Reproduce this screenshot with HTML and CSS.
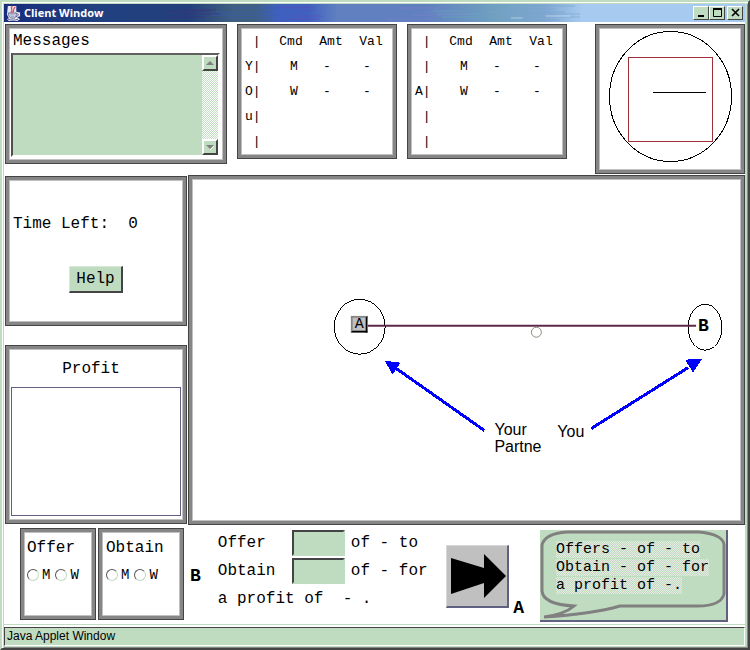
FILE: index.html
```html
<!DOCTYPE html>
<html lang="en">
<head>
<meta charset="utf-8">
<title>Client Window</title>
<link rel="stylesheet" href="styles.css">
</head>
<body>
<div class="window">
  <header class="titlebar">
    <svg class="cup" viewBox="0 0 16 16" aria-hidden="true">
      <path d="M2 0h9v6l4 1v4l-3 1 3 2-3 2H3l-2-2 2-1-2-4z" fill="#e6e6f2"/>
      <path d="M7 0c-4 3 2 3-2 7M10 1c-4 3 0 3-3 6" fill="none" stroke="#e04858" stroke-width="1.3"/>
      <path d="M2.500 7.500h8.500c0 5-1.500 5.500-4 5.500s-4-1-4.500-5.500zM11 8.500c3-1 3 2-.5 3M2 14c4 1.500 7 1.500 11 0" fill="none" stroke="#5c5c8c" stroke-width="1"/>
      <path d="M4 9.500h5M5 11.500h4" stroke="#8c8cb4"/>
    </svg>
    <h1>Client Window</h1>
    <svg class="streaks" viewBox="0 0 580 18" preserveAspectRatio="none" aria-hidden="true">
      <path d="M75 7h45M88 10h42M80 13h35M95 6h30" stroke="#403080"/>
      <path d="M125 8h60M120 11h70M140 4h50M135 14h40" stroke="#3a5cc0"/>
      <path d="M190 3h35M205 12h28M200 15h30M210 6h15" stroke="#6050b8"/>
      <path d="M310 4h45M325 11h60M300 15h45M335 8h40" stroke="#7f86cc"/>
      <path d="M345 7h35M355 13h40M350 10h50" stroke="#6aa8bc"/>
      <path d="M410 5h60M420 10h75M440 13h55M430 2h60M400 8h80M415 16h60" stroke="#78a4d0"/>
      <path d="M425 14h12M460 12h25" stroke="#d8e8f8"/>
    </svg>
    <div class="window-buttons">
      <button type="button" aria-label="Minimize"><svg viewBox="0 0 14 12"><path d="M4 9h6" stroke="#000" stroke-width="2"/></svg></button>
      <button type="button" aria-label="Maximize"><svg viewBox="0 0 14 12"><path d="M3.500 2v7.500h8V2M3 2h9" fill="none" stroke="#000"/><path d="M3 2h9" stroke="#000" stroke-width="2"/></svg></button>
      <button type="button" aria-label="Close"><svg viewBox="0 0 14 12"><path d="M4 2l7 7M11 2L4 9" stroke="#000" stroke-width="1.600"/></svg></button>
    </div>
  </header>

  <main class="applet">
    <section class="top-row">
      <div class="panel messages">
        <label for="messages">Messages</label>
        <div class="message-box">
          <textarea id="messages" readonly></textarea>
          <div class="scrollbar">
            <button type="button" aria-label="Scroll up"><svg viewBox="0 0 12 12"><path d="M2 8l4-4 4 4z" fill="#808080"/></svg></button>
            <button type="button" aria-label="Scroll down"><svg viewBox="0 0 12 12"><path d="M2 4h8L6 8z" fill="#808080"/><path d="M6 9l4-4" stroke="#fff"/></svg></button>
          </div>
        </div>
      </div>

      <div class="panel ledger">
        <table>
          <colgroup><col class="who"><col class="field"><col class="field"><col class="field"></colgroup>
          <thead><tr><td>&nbsp;|</td><th>Cmd</th><th>Amt</th><th>Val</th></tr></thead>
          <tbody>
            <tr><td>Y|</td><td>M</td><td>-</td><td>-</td></tr>
            <tr><td>O|</td><td>W</td><td>-</td><td>-</td></tr>
            <tr><td>u|</td><td></td><td></td><td></td></tr>
            <tr><td>&nbsp;|</td><td></td><td></td><td></td></tr>
          </tbody>
        </table>
      </div>

      <div class="panel ledger">
        <table>
          <colgroup><col class="who"><col class="field"><col class="field"><col class="field"></colgroup>
          <thead><tr><td>&nbsp;|</td><th>Cmd</th><th>Amt</th><th>Val</th></tr></thead>
          <tbody>
            <tr><td>&nbsp;|</td><td>M</td><td>-</td><td>-</td></tr>
            <tr><td>A|</td><td>W</td><td>-</td><td>-</td></tr>
            <tr><td>&nbsp;|</td><td></td><td></td><td></td></tr>
            <tr><td>&nbsp;|</td><td></td><td></td><td></td></tr>
          </tbody>
        </table>
      </div>

      <div class="panel gauge">
        <svg viewBox="0 0 138 138" shape-rendering="crispEdges" aria-hidden="true">
          <ellipse cx="69.500" cy="66.500" rx="61" ry="65" fill="none" stroke="#000"/>
          <rect x="27.500" y="27.500" width="84" height="84" fill="none" stroke="#a03038"/>
          <path d="M52 62.500h53" stroke="#000"/>
        </svg>
      </div>
    </section>

    <section class="middle-row">
      <div class="side">
        <div class="panel timer">
          <p>Time Left:&nbsp; 0</p>
          <button type="button">Help</button>
        </div>
        <div class="panel profit">
          <h2>Profit</h2>
          <div class="profit-plot"></div>
        </div>
      </div>
      <div class="panel network">
        <svg viewBox="0 0 546 339">
          <g fill="none" stroke="#000" shape-rendering="crispEdges">
            <ellipse cx="166" cy="146" rx="25.500" ry="27.500"/>
            <ellipse cx="512" cy="146.500" rx="17" ry="23"/>
          </g>
          <path d="M174 145h329" stroke="#602848" stroke-width="2"/>
          <circle cx="343" cy="151.500" r="5" fill="#fff" stroke="#889078"/>
          <foreignObject x="157" y="135" width="17" height="17"><button type="button" class="node-button">A</button></foreignObject>
          <text x="505" y="150" class="node-self">B</text>
          <g fill="#00f" stroke="#00f" shape-rendering="crispEdges">
            <path d="M200 186l91 64M398 248l97-61" stroke-width="3"/>
            <path d="M191 180l16 2-8 12zM509 178l-17 1 8 13z" stroke="none"/>
          </g>
          <text class="note" x="301" y="254">Your</text>
          <text class="note" x="301" y="272">Partne</text>
          <text class="note" x="364" y="256">You</text>
        </svg>
      </div>
    </section>

    <section class="bottom-row">
      <fieldset class="panel choice offer-choice">
        <legend>Offer</legend>
        <div class="radios">
          <label><input type="radio" name="offer">M</label>
          <label><input type="radio" name="offer">W</label>
        </div>
      </fieldset>
      <fieldset class="panel choice obtain-choice">
        <legend>Obtain</legend>
        <div class="radios">
          <label><input type="radio" name="obtain">M</label>
          <label><input type="radio" name="obtain">W</label>
        </div>
      </fieldset>
      <strong class="player">B</strong>
      <form class="proposal">
        <label for="offer-amount">Offer</label><input id="offer-amount" type="text"><span>of - to</span>
        <label for="obtain-amount">Obtain</label><input id="obtain-amount" type="text"><span>of - for</span>
        <p>a profit of&nbsp; - .</p>
      </form>
      <button type="button" class="send" aria-label="Send offer">
        <svg viewBox="0 0 60 60"><path d="M4 12l33 10V8l22 22-22 22V37L4 48z" fill="#000"/></svg>
      </button>
      <strong class="player partner">A</strong>
      <button type="button" class="bubble">
        <svg viewBox="0 0 186 90" preserveAspectRatio="none"><path d="M27 2H158C174 3 184 8 184 15V64C182 72 172 76 158 76H80Q52 84 4 87Q25 84 34 76C15 75 3 71 2 61V15C4 7 13 3 27 2z" fill="none" stroke="#808080" stroke-width="3"/></svg>
        <span class="bubble-text"><span>Offers - of - to</span><br><span>Obtain - of - for</span><br><span>a profit of -.</span></span>
      </button>
    </section>
  </main>

  <footer class="status">Java Applet Window</footer>
</div>
</body>
</html>
```
FILE: styles.css
```css
:root {
  --green: #c0dcc0;
  --dark: #444;
  --gray: #868686;
  --light: #c0c0c0;
}

* { box-sizing: border-box; }

body {
  margin: 0;
  background: #fff;
  color: #000;
  font: 16px/18px "Liberation Mono", monospace;
}

button, input, textarea { font: inherit; color: inherit; border-radius: 0; }
button { padding: 0; }
h1, h2, p { margin: 0; }
svg { display: block; }

.window {
  display: flex;
  flex-direction: column;
  min-height: 100vh;
  border-style: solid;
  border-width: 2px;
  border-color: var(--green) var(--dark) var(--dark) var(--green);
  box-shadow: inset 1px 1px #fff, inset 2px 2px var(--green), inset -1px -1px var(--gray), inset -3px -2px var(--green);
  padding: 2px 3px 2px 2px;
}

.titlebar {
  position: relative;
  display: flex;
  align-items: center;
  gap: 3px;
  height: 18px;
  padding: 0 2px;
  background: linear-gradient(90deg, #182c7c 0, #204080 12%, #24407c 25%, #406080 31%, #406080 34%, #4060c0 37%, #4060c0 41%, #6080c0 45%, #6080c0 57%, #70a0c0 66%, #80a8d0 73%, #a6caf0 78%);
}
.titlebar h1 {
  flex: 1;
  color: #fff;
  font: bold 11px/18px "Open Sans", sans-serif;
}
.streaks {
  position: absolute;
  left: 12%;
  top: 0;
  width: 77%;
  height: 18px;
  opacity: .6;
}
.cup { width: 15px; height: 17px; }
.window-buttons { position: relative; display: flex; }
.window-buttons button {
  width: 16px;
  height: 14px;
  background: var(--green);
  border: 1px solid;
  border-color: #fff var(--dark) var(--dark) #fff;
}
.window-buttons button:last-child { margin-left: 2px; }

.applet {
  flex: 1;
  padding: 2px 0 0 1px;
}

.panel {
  border: 1px solid var(--dark);
  box-shadow: inset 0 0 0 3px var(--gray), inset 0 0 0 4px var(--light);
  padding: 5px;
  background: #fff;
}

.top-row {
  display: flex;
  align-items: flex-start;
  gap: 10px;
}

.messages { width: 222px; padding: 7px 6px 6px 5px; }
.messages label { display: block; padding-left: 2px; }
.message-box {
  display: flex;
  height: 104px;
  margin-top: 3px;
  background: var(--green);
  border: 2px solid;
  border-color: #606060 #fff #fff #505050;
}
.message-box textarea {
  flex: 1;
  min-width: 0;
  border: 0;
  padding: 2px;
  background: transparent;
  resize: none;
  overflow: hidden;
}
.scrollbar {
  display: flex;
  flex-direction: column;
  justify-content: space-between;
  width: 16px;
  background: conic-gradient(#fff 25%, var(--green) 0 50%, #fff 0 75%, var(--green) 0) 0 0 / 2px 2px;
}
.scrollbar button {
  height: 16px;
  border: 2px solid;
  border-color: #fff var(--dark) var(--dark) #fff;
  background: var(--green);
}

.ledger { width: 160px; padding: 4px 5px; }
.ledger table {
  width: 144px;
  border-collapse: collapse;
  table-layout: fixed;
  font-size: 13px;
}
.ledger .who { width: 24px; }
.ledger .field { width: 40px; }
.ledger th, .ledger td {
  height: 25px;
  padding: 0;
  font-weight: normal;
  text-align: center;
}
.ledger tr > :first-child { text-align: left; padding-left: 2px; }
.ledger th { padding-left: 8px; }
.ledger tbody td:nth-child(2) { padding-left: 14px; }

.gauge { width: 150px; margin-left: auto; }

.middle-row {
  display: flex;
  gap: 1px;
  margin-top: 1px;
}
.side {
  display: flex;
  flex-direction: column;
  gap: 19px;
  width: 182px;
  padding: 1px 0;
}
.timer {
  display: flex;
  flex-direction: column;
  gap: 33px;
  height: 150px;
  padding: 38px 7px 0;
}
.timer button {
  align-self: center;
  width: 54px;
  height: 27px;
  background: var(--green);
  border: 1px solid;
  border-color: #d8e8d8 var(--dark) var(--dark) #d8e8d8;
  border-right-width: 2px;
  border-bottom-width: 2px;
}
.profit {
  flex: 1;
  display: flex;
  flex-direction: column;
  gap: 9px;
  padding: 14px 5px 7px;
}
.profit h2 { font: inherit; text-align: center; padding-right: 10px; }
.profit-plot { flex: 1; border: 1px solid #606080; }
.network { flex: 1; min-width: 0; }
.network svg { width: 100%; height: auto; }

.node-button {
  display: block;
  width: 17px;
  height: 17px;
  background: var(--light);
  border: 2px solid;
  border-color: var(--gray) #000 #000 var(--gray);
  font-size: 15px;
  line-height: 13px;
}
.node-self { font-weight: bold; font-size: 18px; }
.note { font: 16px "Liberation Sans", sans-serif; }

.bottom-row {
  display: flex;
  align-items: flex-start;
  gap: 2px;
  padding: 3px 17px 1px 15px;
}
.choice {
  width: 76px;
  height: 92px;
  min-width: 0;
  margin: 0;
  padding: 10px 6px 6px 7px;
}
.choice legend { float: left; width: 100%; padding: 0; }
.choice .radios { clear: both; display: flex; gap: 5px; padding-top: 9px; font-size: 14px; }
.choice label { display: flex; align-items: center; gap: 3px; }
.choice input {
  appearance: none;
  flex: none;
  width: 12px;
  height: 12px;
  margin: 0;
  border: 1px solid;
  border-color: #555 var(--green) var(--green) #555;
  border-radius: 50%;
}
.offer-choice { padding-left: 6px; }
.obtain-choice { width: 86px; }
.player { font-size: 18px; margin: 39px 15px 0 4px; }

.proposal {
  display: grid;
  grid-template-columns: 68px 53px auto;
  column-gap: 6px;
  row-gap: 2px;
  align-items: center;
  padding-top: 2px;
}
.proposal input {
  width: 53px;
  height: 26px;
  padding: 2px;
  background: var(--green);
  border: 2px solid;
  border-color: var(--dark) var(--green) var(--green) var(--dark);
}
.proposal p { grid-column: 1 / -1; line-height: 26px; }

.send {
  width: 63px;
  height: 63px;
  margin: 17px 0 0 auto;
  background: var(--light);
  border: 1px solid;
  border-color: #d8d8d8 #606080 #606080 #d8d8d8;
  border-right-width: 2px;
  border-bottom-width: 2px;
}
.partner { margin: 71px 14px 0 2px; }

.bubble {
  position: relative;
  width: 188px;
  height: 92px;
  margin-top: 2px;
  padding: 0 0 0 16px;
  background: var(--green);
  border: 0 solid #606080;
  border-width: 0 2px 2px 0;
  font-size: 15px;
  text-align: left;
}
.bubble svg { position: absolute; inset: 0; width: 100%; height: 100%; }
.bubble-text { position: relative; display: block; margin-top: -14px; white-space: nowrap; }
.bubble-text span {
  background: conic-gradient(#e8e8e4 25%, var(--green) 0 50%, #e8e8e4 0 75%, var(--green) 0) 0 0 / 2px 2px;
}

.status {
  height: 19px;
  padding: 0 2px;
  background: var(--green);
  border: 1px solid;
  border-color: var(--dark) #fff #fff var(--dark);
  box-shadow: 0 -2px #fff, 0 -3px var(--green);
  font: 12px/17px "Liberation Sans", sans-serif;
}
```
